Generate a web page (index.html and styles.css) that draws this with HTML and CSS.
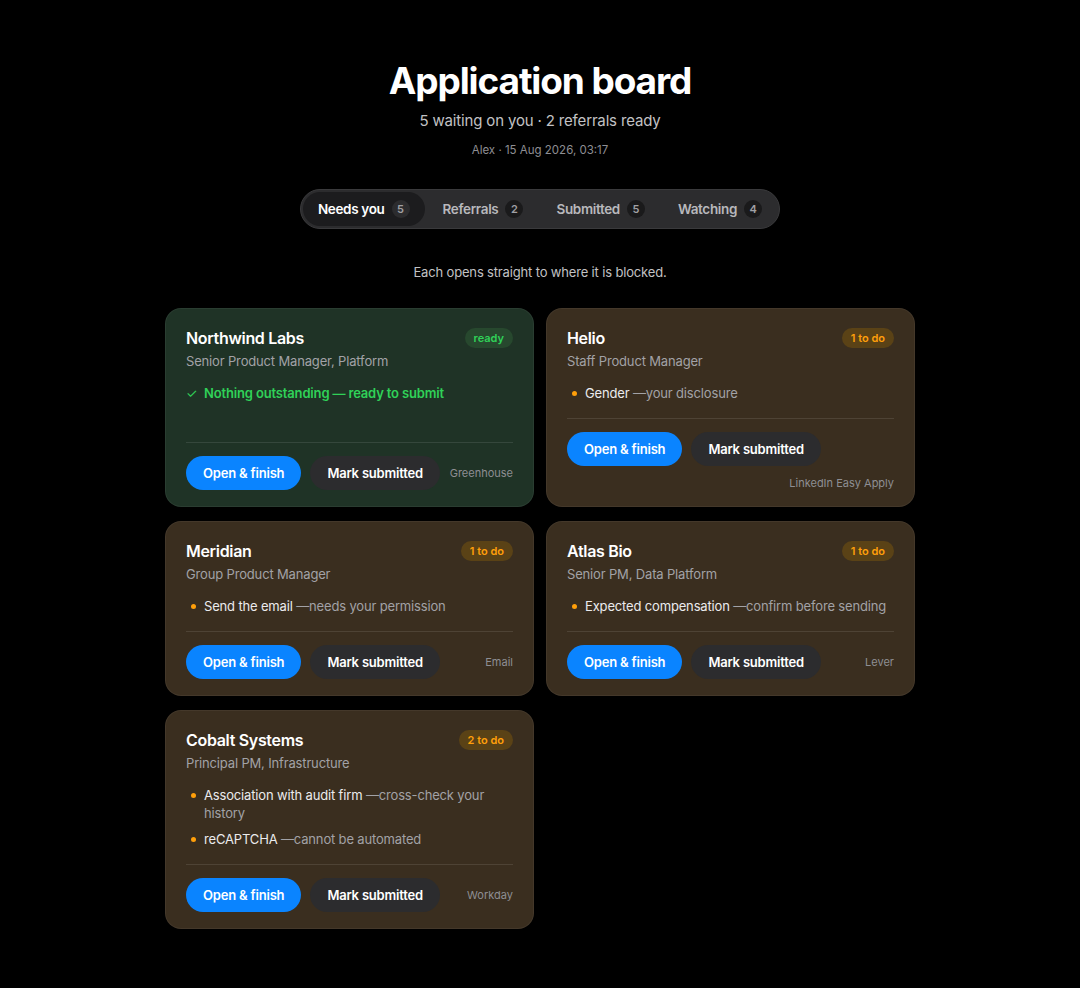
FILE: index.html
```html
<!DOCTYPE html>
<html lang="en">
<head>
    <meta charset="UTF-8">
    <meta name="viewport" content="width=device-width, initial-scale=1.0">
    <title>Application board</title>
    <link rel="stylesheet" href="styles.css">
</head>
<body>
    <header class="page-head">
        <h1>Application board</h1>
        <p class="summary">5 waiting on you · 2 referrals ready</p>
        <p class="meta">Alex · 15 Aug 2026, 03:17</p>
    </header>

    <nav class="tabs">
        <button class="tab active">Needs you <span class="count">5</span></button>
        <button class="tab">Referrals <span class="count">2</span></button>
        <button class="tab">Submitted <span class="count">5</span></button>
        <button class="tab">Watching <span class="count">4</span></button>
    </nav>

    <p class="hint">Each opens straight to where it is blocked.</p>

    <main class="board">
        <article class="card ready">
            <div class="card-head">
                <h2>Northwind Labs</h2>
                <span class="badge">ready</span>
            </div>
            <p class="role">Senior Product Manager, Platform</p>
            <div class="items">
                <p class="done"><span class="tick">✓</span> Nothing outstanding — ready to submit</p>
            </div>
            <div class="card-foot">
                <button class="btn primary">Open &amp; finish</button>
                <button class="btn">Mark submitted</button>
                <span class="source">Greenhouse</span>
            </div>
        </article>

        <article class="card">
            <div class="card-head">
                <h2>Helio</h2>
                <span class="badge">1 to do</span>
            </div>
            <p class="role">Staff Product Manager</p>
            <ul class="items">
                <li>Gender <span class="why">—your disclosure</span></li>
            </ul>
            <div class="card-foot">
                <button class="btn primary">Open &amp; finish</button>
                <button class="btn">Mark submitted</button>
                <span class="source">LinkedIn Easy Apply</span>
            </div>
        </article>

        <article class="card">
            <div class="card-head">
                <h2>Meridian</h2>
                <span class="badge">1 to do</span>
            </div>
            <p class="role">Group Product Manager</p>
            <ul class="items">
                <li>Send the email <span class="why">—needs your permission</span></li>
            </ul>
            <div class="card-foot">
                <button class="btn primary">Open &amp; finish</button>
                <button class="btn">Mark submitted</button>
                <span class="source">Email</span>
            </div>
        </article>

        <article class="card">
            <div class="card-head">
                <h2>Atlas Bio</h2>
                <span class="badge">1 to do</span>
            </div>
            <p class="role">Senior PM, Data Platform</p>
            <ul class="items">
                <li>Expected compensation <span class="why">—confirm before sending</span></li>
            </ul>
            <div class="card-foot">
                <button class="btn primary">Open &amp; finish</button>
                <button class="btn">Mark submitted</button>
                <span class="source">Lever</span>
            </div>
        </article>

        <article class="card">
            <div class="card-head">
                <h2>Cobalt Systems</h2>
                <span class="badge">2 to do</span>
            </div>
            <p class="role">Principal PM, Infrastructure</p>
            <ul class="items">
                <li>Association with audit firm <span class="why">—cross-check your history</span></li>
                <li>reCAPTCHA <span class="why">—cannot be automated</span></li>
            </ul>
            <div class="card-foot">
                <button class="btn primary">Open &amp; finish</button>
                <button class="btn">Mark submitted</button>
                <span class="source">Workday</span>
            </div>
        </article>
    </main>
</body>
</html>
```

FILE: styles.css
```css
body {
    margin: 0;
    background: #000;
    color: #f2f2f2;
    font-family: Inter, 'Noto Sans', sans-serif;
    letter-spacing: -0.01em;
    padding: 58px 20px 40px;
}
p, h1, h2, ul {
    margin: 0;
}
button {
    font-family: inherit;
    border: none;
    cursor: pointer;
}

.page-head {
    text-align: center;
}
.page-head h1 {
    font-size: 37px;
    font-weight: 700;
    letter-spacing: -0.03em;
    line-height: 46px;
    color: #fff;
}
.summary {
    margin-top: 7px;
    font-size: 15px;
    line-height: 20px;
    color: #c2c2c4;
}
.meta {
    margin-top: 12px;
    font-size: 11.5px;
    line-height: 15px;
    letter-spacing: 0;
    color: #8e8e93;
}

/* segmented filter */
.tabs {
    display: flex;
    width: fit-content;
    margin: 31px auto 0;
    padding: 2px;
    gap: 3px;
    background: #2c2c2e;
    border: 1px solid #3a3a3c;
    border-radius: 22px;
}
.tab {
    display: flex;
    align-items: center;
    gap: 7px;
    height: 34px;
    padding: 0 15px;
    border-radius: 17px;
    background: transparent;
    color: #b8b8bc;
    font-size: 13.5px;
    font-weight: 600;
    letter-spacing: -0.025em;
}
.tab.active {
    background: #1c1c1e;
    color: #fff;
}
.count {
    display: inline-flex;
    align-items: center;
    justify-content: center;
    width: 18px;
    height: 18px;
    border-radius: 50%;
    background: #1a1a1b;
    color: #a0a0a4;
    font-size: 11px;
    font-weight: 600;
    letter-spacing: 0;
}
.tab.active .count {
    background: #2c2c2e;
}

.hint {
    margin-top: 34px;
    text-align: center;
    font-size: 13px;
    line-height: 18px;
    color: #c2c2c4;
}

/* cards */
.board {
    display: grid;
    grid-template-columns: 1fr 1fr;
    column-gap: 12px;
    row-gap: 14px;
    width: 750px;
    margin: 27px auto 0;
}
.card {
    display: flex;
    flex-direction: column;
    padding: 18px 20px 16px;
    border: 1px solid rgba(255, 255, 255, 0.05);
    border-radius: 16px;
    background: #3a2e1f;
}
.card.ready {
    background: #1f3326;
}
.card-head {
    display: flex;
    align-items: center;
    justify-content: space-between;
    height: 22px;
}
.card-head h2 {
    font-size: 16px;
    font-weight: 600;
    letter-spacing: -0.02em;
    color: #fff;
}
.badge {
    padding: 3px 9px;
    border-radius: 10px;
    background: #5a4216;
    color: #ff9f0a;
    font-size: 11px;
    font-weight: 600;
    line-height: 14px;
    letter-spacing: 0;
}
.card.ready .badge {
    background: #27482e;
    color: #30d158;
}
.role {
    margin-top: 3px;
    font-size: 13px;
    line-height: 18px;
    color: #a2a2a6;
}
.items {
    flex: 1;
    margin-top: 14px;
    margin-bottom: 16px;
    padding: 0;
    list-style: none;
    font-size: 13px;
    line-height: 18px;
    color: #ebebed;
}
.items li {
    position: relative;
    padding-left: 18px;
}
.items li + li {
    margin-top: 8px;
}
.items li::before {
    content: "";
    position: absolute;
    left: 5px;
    top: 7px;
    width: 5px;
    height: 5px;
    border-radius: 50%;
    background: #ff9f0a;
}
.why {
    color: #a2a2a6;
}
.done {
    color: #30d158;
    font-weight: 600;
}
.tick {
    display: inline-block;
    width: 15px;
    font-weight: 400;
}

.card-foot {
    display: flex;
    flex-wrap: wrap;
    align-items: center;
    gap: 10px 9px;
    padding-top: 13px;
    border-top: 1px solid rgba(255, 255, 255, 0.1);
}
.btn {
    height: 34px;
    padding: 0 17px;
    border-radius: 17px;
    background: #2c2c2e;
    color: #fff;
    font-size: 13px;
    font-weight: 600;
    letter-spacing: -0.015em;
}
.btn.primary {
    background: #0a84ff;
}
.source {
    margin-left: auto;
    font-size: 11px;
    line-height: 14px;
    letter-spacing: 0;
    color: #8e8e93;
}
```
